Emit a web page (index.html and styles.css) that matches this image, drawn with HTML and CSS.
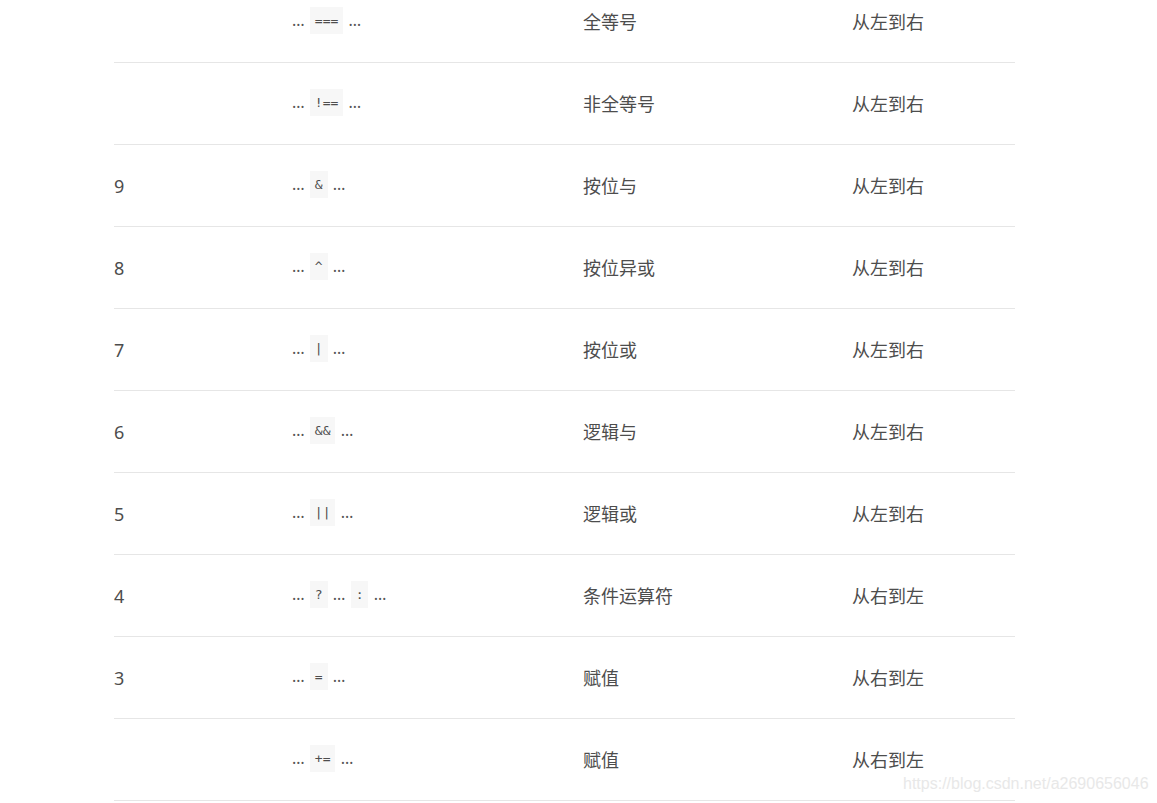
FILE: index.html
```html
<!DOCTYPE html>
<html lang="zh">
<head>
<meta charset="utf-8">
<link rel="stylesheet" href="styles.css">
</head>
<body>
<div class="page">
  <table class="ops">
    <colgroup>
      <col class="c1"><col class="c2"><col class="c3"><col class="c4">
    </colgroup>
    <tbody>
      <tr><td></td><td>… <code>===</code> …</td><td>全等号</td><td>从左到右</td></tr>
      <tr><td></td><td>… <code>!==</code> …</td><td>非全等号</td><td>从左到右</td></tr>
      <tr><td>9</td><td>… <code>&amp;</code> …</td><td>按位与</td><td>从左到右</td></tr>
      <tr><td>8</td><td>… <code>^</code> …</td><td>按位异或</td><td>从左到右</td></tr>
      <tr><td>7</td><td>… <code>|</code> …</td><td>按位或</td><td>从左到右</td></tr>
      <tr><td>6</td><td>… <code>&amp;&amp;</code> …</td><td>逻辑与</td><td>从左到右</td></tr>
      <tr><td>5</td><td>… <code>||</code> …</td><td>逻辑或</td><td>从左到右</td></tr>
      <tr><td>4</td><td>… <code>?</code> … <code>:</code> …</td><td>条件运算符</td><td>从右到左</td></tr>
      <tr><td>3</td><td>… <code>=</code> …</td><td>赋值</td><td>从右到左</td></tr>
      <tr><td></td><td>… <code>+=</code> …</td><td>赋值</td><td>从右到左</td></tr>
    </tbody>
  </table>
  <div class="watermark">https://blog.csdn.net/a2690656046</div>
</div>
</body>
</html>
```
FILE: styles.css
```css
html, body {
  margin: 0;
  padding: 0;
  background: #fff;
}
body {
  font-family: "Noto Sans", "Noto Sans CJK SC", sans-serif;
  color: #4d4d4d;
  overflow: hidden;
  height: 803px;
}
.page {
  display: flow-root;
  position: relative;
  width: 1157px;
  height: 803px;
  padding-left: 114px;
  box-sizing: border-box;
}
.ops {
  border-collapse: collapse;
  table-layout: fixed;
  width: 901px;
  margin-top: -19px;
  font-size: 18px;
}
.c1 { width: 178px; }
.c2 { width: 291px; }
.c3 { width: 269px; }
.c4 { width: 163px; }
.ops td {
  height: 81px;
  padding: 0;
  border-bottom: 1px solid #e6e6e6;
  vertical-align: middle;
  white-space: nowrap;
  line-height: 24px;
}
.ops td:nth-child(2) {
  font-size: 16px;
  color: #555;
}
code {
  font-family: "DejaVu Sans Mono", "Liberation Mono", monospace;
  font-size: 13px;
  color: #4d4d4d;
  background: #f7f7f7;
  display: inline-block;
  padding: 0 5px;
  line-height: 27px;
  vertical-align: middle;
  margin: 0 1px;
  position: relative;
  top: -1px;
}
.watermark {
  position: absolute;
  left: 903px;
  top: 775px;
  font-family: "Liberation Sans", Arial, sans-serif;
  font-size: 16px;
  color: #e8e8e8;
}
```
